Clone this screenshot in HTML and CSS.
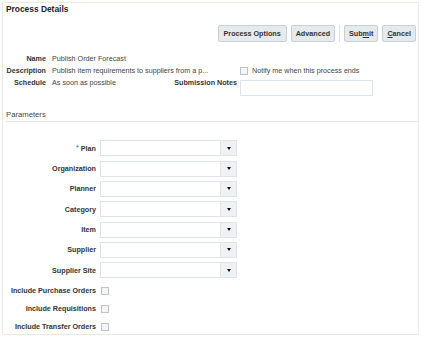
FILE: index.html
```html
<!DOCTYPE html>
<html lang="en">
<head>
  <meta charset="UTF-8" />
  <title>Process Details</title>
  <link rel="stylesheet" href="styles.css">
</head>
<body>
  <div class="panel">
    <h1 class="title">Process Details</h1>

    <div class="toolbar">
      <button class="btn btn-wide">Process Options</button>
      <button class="btn">Advanced</button>
      <span class="sep"></span>
      <button class="btn">Sub<u>m</u>it</button>
      <button class="btn"><u>C</u>ancel</button>
    </div>

    <div class="info">
      <div class="lbl">Name</div>
      <div class="val">Publish Order Forecast</div>
      <div></div>
      <div></div>

      <div class="lbl">Description</div>
      <div class="val wide">Publish item requirements to suppliers from a p...</div>
      <div class="notify"><span class="check"></span>Notify me when this process ends</div>

      <div class="lbl">Schedule</div>
      <div class="val">As soon as possible</div>
      <div class="lbl notes-lbl">Submission Notes</div>
      <div><div class="textbox"></div></div>
    </div>

    <h2 class="section">Parameters</h2>

    <div class="params">
      <div class="plbl"><span class="req">*</span> Plan</div>
      <div class="combo"><span class="combo-in"></span><span class="combo-btn"><span class="tri"></span></span></div>
      <div class="plbl">Organization</div>
      <div class="combo"><span class="combo-in"></span><span class="combo-btn"><span class="tri"></span></span></div>
      <div class="plbl">Planner</div>
      <div class="combo"><span class="combo-in"></span><span class="combo-btn"><span class="tri"></span></span></div>
      <div class="plbl">Category</div>
      <div class="combo"><span class="combo-in"></span><span class="combo-btn"><span class="tri"></span></span></div>
      <div class="plbl">Item</div>
      <div class="combo"><span class="combo-in"></span><span class="combo-btn"><span class="tri"></span></span></div>
      <div class="plbl">Supplier</div>
      <div class="combo"><span class="combo-in"></span><span class="combo-btn"><span class="tri"></span></span></div>
      <div class="plbl">Supplier Site</div>
      <div class="combo"><span class="combo-in"></span><span class="combo-btn"><span class="tri"></span></span></div>
    </div>

    <div class="flags">
      <div class="plbl">Include Purchase Orders</div>
      <div><span class="check"></span></div>
      <div class="plbl">Include Requisitions</div>
      <div><span class="check"></span></div>
      <div class="plbl">Include Transfer Orders</div>
      <div><span class="check"></span></div>
    </div>
  </div>
</body>
</html>
```

FILE: styles.css
```css
* {
  margin: 0;
  padding: 0;
  box-sizing: border-box;
}
body {
  font-family: 'Liberation Sans', Arial, sans-serif;
  font-size: 7.2px;
  color: #333;
  background: #fff;
}
.panel {
  margin: 2px;
  width: 417px;
  height: 333px;
  border: 1px solid #ebe8dd;
}
.title {
  font-size: 8.4px;
  line-height: 10px;
  font-weight: bold;
  color: #222;
  padding: 1px 0 0 3px;
}
.toolbar {
  display: flex;
  justify-content: flex-end;
  align-items: center;
  gap: 4px;
  margin-top: 11px;
  padding-right: 2px;
}
.btn {
  font-family: inherit;
  font-size: 7.2px;
  font-weight: bold;
  color: #333;
  height: 17px;
  padding: 0 4px;
  background: #e5eaed;
  border: 1px solid #c8d0d6;
  border-radius: 2px;
}
.btn-wide {
  padding: 0 5px;
}
.btn u {
  text-decoration-thickness: 1px;
}
.sep {
  width: 1px;
  height: 17px;
  background: #dde2e5;
}
.info {
  display: grid;
  grid-template-columns: 43px 124px 70px 133px;
  grid-template-rows: 12px 12px 19px;
  margin-top: 11.3px;
  line-height: 12px;
}
.lbl {
  font-weight: bold;
  text-align: right;
  white-space: nowrap;
}
.val {
  padding-left: 6px;
  color: #444;
  white-space: nowrap;
}
.val.wide {
  grid-column: 2 / span 2;
}
.notes-lbl {
  padding-right: 3px;
}
.notify {
  display: flex;
  align-items: center;
  color: #444;
  white-space: nowrap;
}
.notify .check {
  margin-right: 4px;
}
.textbox {
  margin-top: 3px;
  width: 133px;
  height: 16px;
  border: 1px solid #dde3e8;
  background: #fff;
}
.check {
  display: inline-block;
  width: 8px;
  height: 8px;
  border: 1px solid #bcc3c9;
  background: #f3f4f5;
  vertical-align: middle;
}
.section {
  font-size: 7.7px;
  font-weight: normal;
  line-height: 10px;
  color: #444;
  margin: 14px 0 0 3px;
  padding-bottom: 1px;
  border-bottom: 1px solid #e8e8e8;
}
.params {
  display: grid;
  grid-template-columns: 93px 137px;
  grid-auto-rows: 16px;
  column-gap: 4px;
  row-gap: 4.33px;
  margin-top: 18px;
}
.plbl {
  font-weight: bold;
  text-align: right;
  white-space: nowrap;
  display: flex;
  align-items: center;
  justify-content: flex-end;
}
.req {
  color: #1a73c8;
  font-weight: normal;
  font-size: 8px;
  margin-right: 2px;
  position: relative;
  top: -1px;
}
.combo {
  display: flex;
  border: 1px solid #dde3e8;
  background: #fff;
}
.combo-in {
  flex: 1;
}
.combo-btn {
  width: 16px;
  background: #eff2f4;
  border-left: 1px solid #e1e5e8;
  display: flex;
  align-items: center;
  justify-content: center;
}
.tri {
  width: 0;
  height: 0;
  border-left: 2.5px solid transparent;
  border-right: 2.5px solid transparent;
  border-top: 3px solid #111;
}
.flags {
  display: grid;
  grid-template-columns: 93px 20px;
  grid-auto-rows: 18px;
  column-gap: 5px;
  margin-top: 3.7px;
}
.flags > div {
  display: flex;
  align-items: center;
}
```
